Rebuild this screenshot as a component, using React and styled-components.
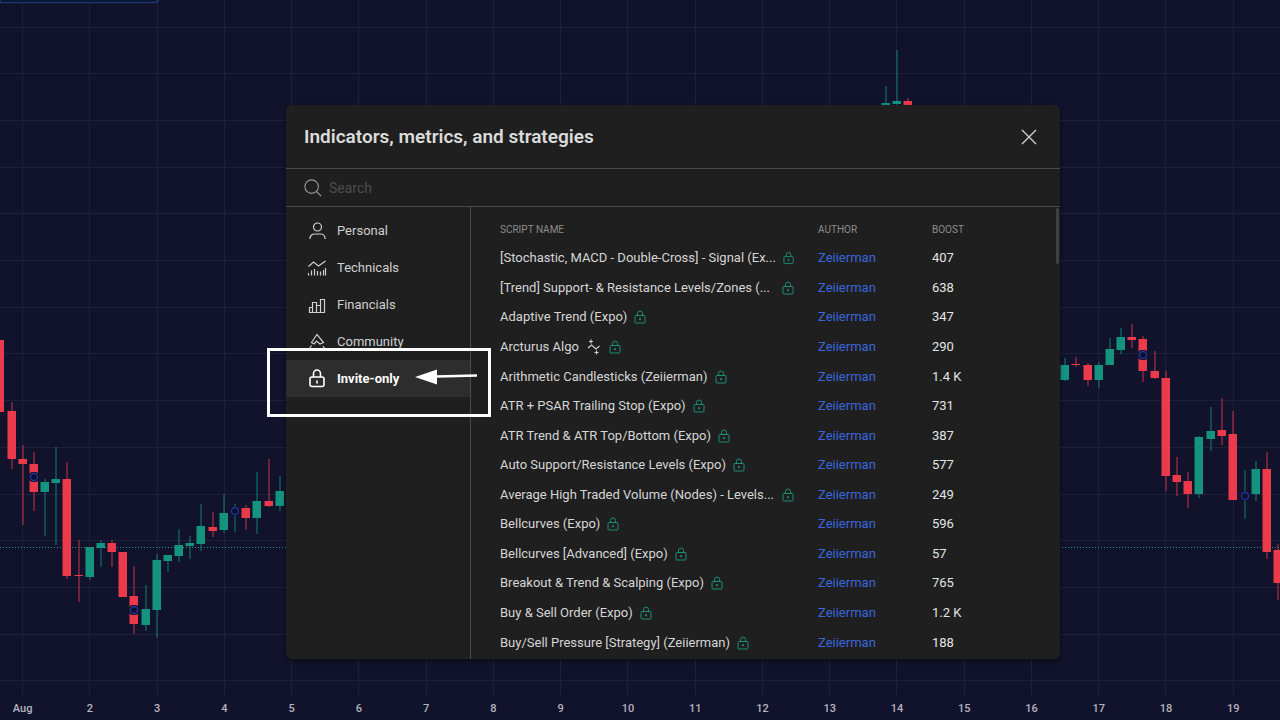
import React from 'react'
import styled, { createGlobalStyle, css } from 'styled-components'

const GlobalStyle = createGlobalStyle`
	* {
		box-sizing: border-box;
	}

	body {
		margin: 0;
		background: #11122b;
		color: #d6d6d6;
		font-family: 'Trebuchet MS', Roboto, 'Open Sans', sans-serif;
		font-size: 13px;
	}

	button,
	input {
		font: inherit;
		color: inherit;
	}
`

const Page = styled.main`
	position: relative;
	display: flex;
	flex-direction: column;
	height: 100vh;
	overflow: hidden;
`

const ChartCanvas = styled.svg`
	display: block;
	width: 100%;
	flex: 1;
	min-height: 0;
`

const TimeAxis = styled.div`
	display: grid;
	grid-template-columns: repeat(19, 1fr);
	align-items: center;
	height: 24px;
	margin: 0 13px 0 -11px;
	color: #b4b5c0;
	font-size: 11px;
	font-weight: 500;
	text-align: center;
`

const Overlay = styled.div`
	position: absolute;
	inset: 0;
	display: flex;
	padding: 105px 220px 61px 286px;
`

const Dialog = styled.section`
	display: flex;
	flex: 1;
	flex-direction: column;
	min-width: 0;
	background: #1f1f1f;
	border-radius: 6px;
	box-shadow: 0 2px 4px rgba(0, 0, 0, 0.4);
`

const DialogHeader = styled.header`
	display: flex;
	align-items: center;
	justify-content: space-between;
	height: 64px;
	padding: 0 19px 0 18px;
	border-bottom: 1px solid #4a4a4a;
`

const Title = styled.h1`
	margin: 0;
	color: #dbdbdb;
	font-size: 19px;
	font-weight: 600;
	line-height: 24px;
`

const CloseButton = styled.button`
	display: flex;
	padding: 4px;
	background: none;
	border: 0;
	color: #cfcfcf;
	cursor: pointer;
`

const SearchBar = styled.label`
	display: flex;
	align-items: center;
	gap: 7px;
	height: 38px;
	padding: 0 18px;
	border-bottom: 1px solid #4a4a4a;
	color: #9a9a9a;
`

const SearchInput = styled.input`
	flex: 1;
	min-width: 0;
	padding: 0;
	background: none;
	border: 0;
	outline: 0;
	font-size: 14px;

	&::placeholder {
		color: #4d4d4d;
		opacity: 1;
	}
`

const DialogBody = styled.div`
	display: flex;
	flex: 1;
	min-height: 0;
`

const Sidebar = styled.nav`
	display: flex;
	flex-direction: column;
	width: 185px;
	padding-top: 5px;
	border-right: 1px solid #4a4a4a;
`

const SidebarItem = styled.div`
	position: relative;
`

const SidebarButton = styled.button`
	display: flex;
	align-items: center;
	gap: 10px;
	width: 100%;
	height: 37px;
	padding: 0 0 0 21px;
	background: none;
	border: 0;
	color: #d0d0d0;
	text-align: left;
	cursor: pointer;

	${({ $active }) =>
		$active &&
		css`
			background: #2d2d2d;
			color: #fff;
			font-weight: 700;
		`}
`

const Highlight = styled.div`
	position: absolute;
	z-index: 1;
	top: -12px;
	right: -21px;
	bottom: -20px;
	left: -19px;
	border: 3px solid #fff;
	pointer-events: none;
`

const HighlightArrow = styled.svg`
	position: absolute;
	top: 17px;
	right: 10px;
`

const Results = styled.div`
	position: relative;
	flex: 1;
	min-width: 0;
	padding: 0 2px 2px 29px;
	overflow: hidden;
`

const Scrollbar = styled.div`
	position: absolute;
	top: 1px;
	right: 1px;
	width: 3px;
	height: 56px;
	background: #404040;
	border-radius: 2px;
`

const Table = styled.table`
	width: 100%;
	height: 100%;
	border-collapse: collapse;
	table-layout: fixed;
`

const HeadCell = styled.th`
	width: ${({ $width }) => $width || 'auto'};
	height: 36px;
	padding: 8px 0 0;
	color: #8c8c8c;
	font-size: 10px;
	font-weight: 400;
	text-align: left;
`

const Cell = styled.td`
	padding: 1px 0 0;
	color: ${({ $strong }) => ($strong ? '#e4e4e4' : '#d6d6d6')};
	line-height: 20px;
	white-space: nowrap;
`

const ScriptName = styled.div`
	display: flex;
	align-items: center;
	gap: 7px;
	padding-right: 24px;
`

const NameText = styled.span`
	flex: ${({ $full }) => ($full ? '1' : '0 1 auto')};
`

const AuthorLink = styled.a`
	color: #3a66dd;
	text-decoration: none;
`

const GREEN = '#14937f'
const RED = '#ea3a4b'

// x, body top, body bottom, wick top, wick bottom, colour
const candles = [
	[0, 340, 412, 340, 412, RED],
	[12, 411, 459, 402, 469, RED],
	[23, 459, 464, 445, 525, RED],
	[34, 464, 492, 452, 511, RED],
	[45, 482, 492, 479, 536, GREEN],
	[56, 479, 483, 447, 545, GREEN],
	[67, 479, 576, 462, 579, RED],
	[79, 575, 576, 540, 602, RED],
	[90, 547, 577, 547, 580, GREEN],
	[101, 543, 548, 540, 567, GREEN],
	[112, 543, 552, 540, 567, RED],
	[123, 552, 597, 552, 597, RED],
	[134, 596, 624, 566, 634, RED],
	[146, 609, 625, 585, 631, GREEN],
	[157, 560, 610, 554, 638, GREEN],
	[168, 555, 561, 555, 572, GREEN],
	[179, 545, 556, 529, 562, GREEN],
	[190, 543, 546, 536, 559, GREEN],
	[201, 526, 544, 504, 551, GREEN],
	[213, 527, 531, 512, 537, RED],
	[224, 513, 530, 494, 533, GREEN],
	[235, 510, 512, 504, 532, GREEN],
	[246, 508, 518, 505, 530, RED],
	[257, 501, 518, 472, 534, GREEN],
	[269, 501, 506, 459, 507, RED],
	[280, 491, 506, 476, 511, GREEN],
	[886, 103, 105, 86, 105, GREEN],
	[897, 101, 104, 50, 106, GREEN],
	[908, 101, 106, 98, 106, RED],
	[1065, 365, 380, 358, 381, GREEN],
	[1076, 364, 365, 357, 367, RED],
	[1088, 365, 380, 363, 386, RED],
	[1099, 365, 380, 362, 388, GREEN],
	[1110, 349, 365, 338, 365, GREEN],
	[1121, 337, 350, 328, 354, GREEN],
	[1132, 337, 340, 324, 348, RED],
	[1143, 339, 371, 336, 382, RED],
	[1155, 371, 378, 351, 379, RED],
	[1166, 378, 476, 371, 491, RED],
	[1177, 475, 482, 457, 496, RED],
	[1188, 481, 494, 472, 508, RED],
	[1199, 437, 494, 436, 498, GREEN],
	[1211, 431, 439, 407, 451, GREEN],
	[1222, 430, 436, 398, 445, RED],
	[1233, 434, 500, 411, 500, RED],
	[1245, 495, 497, 470, 519, GREEN],
	[1256, 469, 494, 461, 501, GREEN],
	[1267, 469, 552, 452, 559, RED],
	[1278, 550, 583, 544, 600, RED],
]

const markers = [
	[34, 477],
	[134, 610],
	[235, 511],
	[1143, 355],
	[1245, 496],
]

const days = ['Aug', ...Array.from({ length: 18 }, (_, i) => String(i + 2))]

const scripts = [
	{ name: '[Stochastic, MACD - Double-Cross] - Signal (Ex...', boost: '407', full: true },
	{ name: '[Trend] Support- & Resistance Levels/Zones (...', boost: '638', full: true },
	{ name: 'Adaptive Trend (Expo)', boost: '347' },
	{ name: 'Arcturus Algo', boost: '290', strategy: true },
	{ name: 'Arithmetic Candlesticks (Zeiierman)', boost: '1.4 K' },
	{ name: 'ATR + PSAR Trailing Stop (Expo)', boost: '731' },
	{ name: 'ATR Trend & ATR Top/Bottom (Expo)', boost: '387' },
	{ name: 'Auto Support/Resistance Levels (Expo)', boost: '577' },
	{ name: 'Average High Traded Volume (Nodes) - Levels...', boost: '249', full: true },
	{ name: 'Bellcurves (Expo)', boost: '596' },
	{ name: 'Bellcurves [Advanced] (Expo)', boost: '57' },
	{ name: 'Breakout & Trend & Scalping (Expo)', boost: '765' },
	{ name: 'Buy & Sell Order (Expo)', boost: '1.2 K' },
	{ name: 'Buy/Sell Pressure [Strategy] (Zeiierman)', boost: '188' },
]

function Icon({ size = 20, children, ...rest }) {
	return (
		<svg
			width={size}
			height={size}
			viewBox="0 0 20 20"
			fill="none"
			stroke="currentColor"
			strokeWidth="1.2"
			aria-hidden="true"
			{...rest}
		>
			{children}
		</svg>
	)
}

function PersonIcon() {
	return (
		<Icon>
			<circle cx="10.5" cy="6" r="4" />
			<path d="M3 18v-.8C3 14.800 5 13 7.500 13h6c2.500 0 4.500 1.800 4.500 4.200v.8" />
		</Icon>
	)
}

function TechnicalsIcon() {
	return (
		<Icon>
			<path d="M1.500 8.500 6.500 4l5 4L18.500 3" />
			<path d="M1.500 15v2.500M4.500 12.500v5M7.500 11v6.500M10.500 13v4.500M13.500 13.500v4M16.500 12v5.500M18.500 10v7.500" />
		</Icon>
	)
}

function FinancialsIcon() {
	return (
		<Icon>
			<path d="M2.500 17.500v-5h3v5zM5.500 17.500v-10h4v10zM9.500 17.500v-7h4v7zM13.500 17.500v-13h4v13z" />
		</Icon>
	)
}

function CommunityIcon() {
	return (
		<Icon>
			<path d="M4.500 10.500 10 2.500l6.500 8-3.500 1.500-3.500-3-2.500 3zM4.500 13.500 1.500 18M16 14l3 4.500" />
		</Icon>
	)
}

function LockIcon() {
	return (
		<Icon strokeWidth="1.6">
			<rect x="3" y="8" width="14" height="9.500" rx="2" />
			<path d="M6.500 8V4.500a3.500 3.500 0 0 1 7 0V8M10 11.500v3" />
		</Icon>
	)
}

function SmallLock() {
	return (
		<svg width="12" height="14" viewBox="0 0 12 14" fill="none" stroke="#1b8f77" role="img" aria-label="Invite-only">
			<rect x="1" y="5.500" width="10" height="7.500" rx="1" />
			<path d="M3.500 5.500V3.500a2.500 2.500 0 0 1 5 0v2" />
			<circle cx="6" cy="9.200" r=".7" fill="#1b8f77" />
		</svg>
	)
}

function StrategyIcon() {
	return (
		<svg width="16" height="16" viewBox="0 0 16 16" fill="none" stroke="#cfcfcf" role="img" aria-label="Strategy">
			<path d="m2 9 3.500-3 4.500 4 3.500-3" strokeWidth="1.200" />
			<path d="M5 .5v4M3 2.500h4M8.500 13.500h4M10.500 11.500v4" strokeWidth="1.200" />
		</svg>
	)
}

function Chart() {
	return (
		<ChartCanvas viewBox="0 0 1280 696" preserveAspectRatio="none" role="img" aria-label="Price chart">
			<g fill="#1e2039">
				{days.map((day, i) => (
					<rect key={day} x={Math.round(22 + i * 67.25)} y="0" width="1" height="696" />
				))}
				{Array.from({ length: 15 }, (_, i) => (
					<rect key={i} x="0" y={Math.round(26.5 + i * 46.7)} width="1280" height="1" />
				))}
			</g>
			<path d="M0 2.500h155a3 3 0 0 0 3-3H0z" fill="#050d24" stroke="#1d3a70" strokeWidth="1.500" />
			<path d="M0 547.500h1280" stroke="#1f9a9a" strokeDasharray="1 2" />
			{candles.map(([x, top, bottom, high, low, color]) => (
				<g key={x} fill={color}>
					<rect x={x - 0.5} y={high} width="1" height={low - high} opacity="0.85" />
					<rect x={x - 4.5} y={top} width="8.500" height={bottom - top} />
				</g>
			))}
			{markers.map(([x, y]) => (
				<g key={x}>
					<rect x={x - 5} y={y - 5} width="10" height="10" rx="4" fill="#11122b" />
					<circle cx={x} cy={y} r="3.500" fill="#0b0d33" stroke="#24379b" strokeWidth="1.300" />
				</g>
			))}
		</ChartCanvas>
	)
}

const categories = [
	{ label: 'Personal', icon: PersonIcon },
	{ label: 'Technicals', icon: TechnicalsIcon },
	{ label: 'Financials', icon: FinancialsIcon },
	{ label: 'Community', icon: CommunityIcon },
	{ label: 'Invite-only', icon: LockIcon, active: true },
]

function Categories() {
	return (
		<Sidebar aria-label="Categories">
			{categories.map(({ label, icon: CategoryIcon, active }) => (
				<SidebarItem key={label}>
					<SidebarButton type="button" $active={active}>
						<CategoryIcon />
						{label}
					</SidebarButton>
					{active && (
						<Highlight>
							<HighlightArrow width="64" height="18" viewBox="0 0 64 18" aria-hidden="true">
								<path d="M1 9 23 1.500v15z" fill="#fff" />
								<path d="M22 8.500 63 7.500" stroke="#fff" strokeWidth="2.500" />
							</HighlightArrow>
						</Highlight>
					)}
				</SidebarItem>
			))}
		</Sidebar>
	)
}

function ScriptTable() {
	return (
		<Results>
			<Table>
				<thead>
					<tr>
						<HeadCell scope="col">SCRIPT NAME</HeadCell>
						<HeadCell scope="col" $width="114px">AUTHOR</HeadCell>
						<HeadCell scope="col" $width="126px">BOOST</HeadCell>
					</tr>
				</thead>
				<tbody>
					{scripts.map(({ name, boost, full, strategy }) => (
						<tr key={name}>
							<Cell>
								<ScriptName>
									<NameText $full={full}>{name}</NameText>
									{strategy && <StrategyIcon />}
									<SmallLock />
								</ScriptName>
							</Cell>
							<Cell>
								<AuthorLink href="#zeiierman">Zeiierman</AuthorLink>
							</Cell>
							<Cell $strong>{boost}</Cell>
						</tr>
					))}
				</tbody>
			</Table>
			<Scrollbar />
		</Results>
	)
}

export default function App() {
	return (
		<Page>
			<GlobalStyle />
			<Chart />
			<TimeAxis>
				{days.map((day) => (
					<span key={day}>{day}</span>
				))}
			</TimeAxis>
			<Overlay>
				<Dialog role="dialog" aria-labelledby="dialog-title">
					<DialogHeader>
						<Title id="dialog-title">Indicators, metrics, and strategies</Title>
						<CloseButton type="button" aria-label="Close">
							<svg width="16" height="16" viewBox="0 0 16 16" stroke="currentColor" strokeWidth="1.400">
								<path d="m1 1 14 14M15 1 1 15" />
							</svg>
						</CloseButton>
					</DialogHeader>
					<SearchBar>
						<Icon size={18}>
							<circle cx="8.500" cy="8.500" r="7.500" />
							<path d="m14 14 5 5" />
						</Icon>
						<SearchInput type="text" placeholder="Search" aria-label="Search" />
					</SearchBar>
					<DialogBody>
						<Categories />
						<ScriptTable />
					</DialogBody>
				</Dialog>
			</Overlay>
		</Page>
	)
}
